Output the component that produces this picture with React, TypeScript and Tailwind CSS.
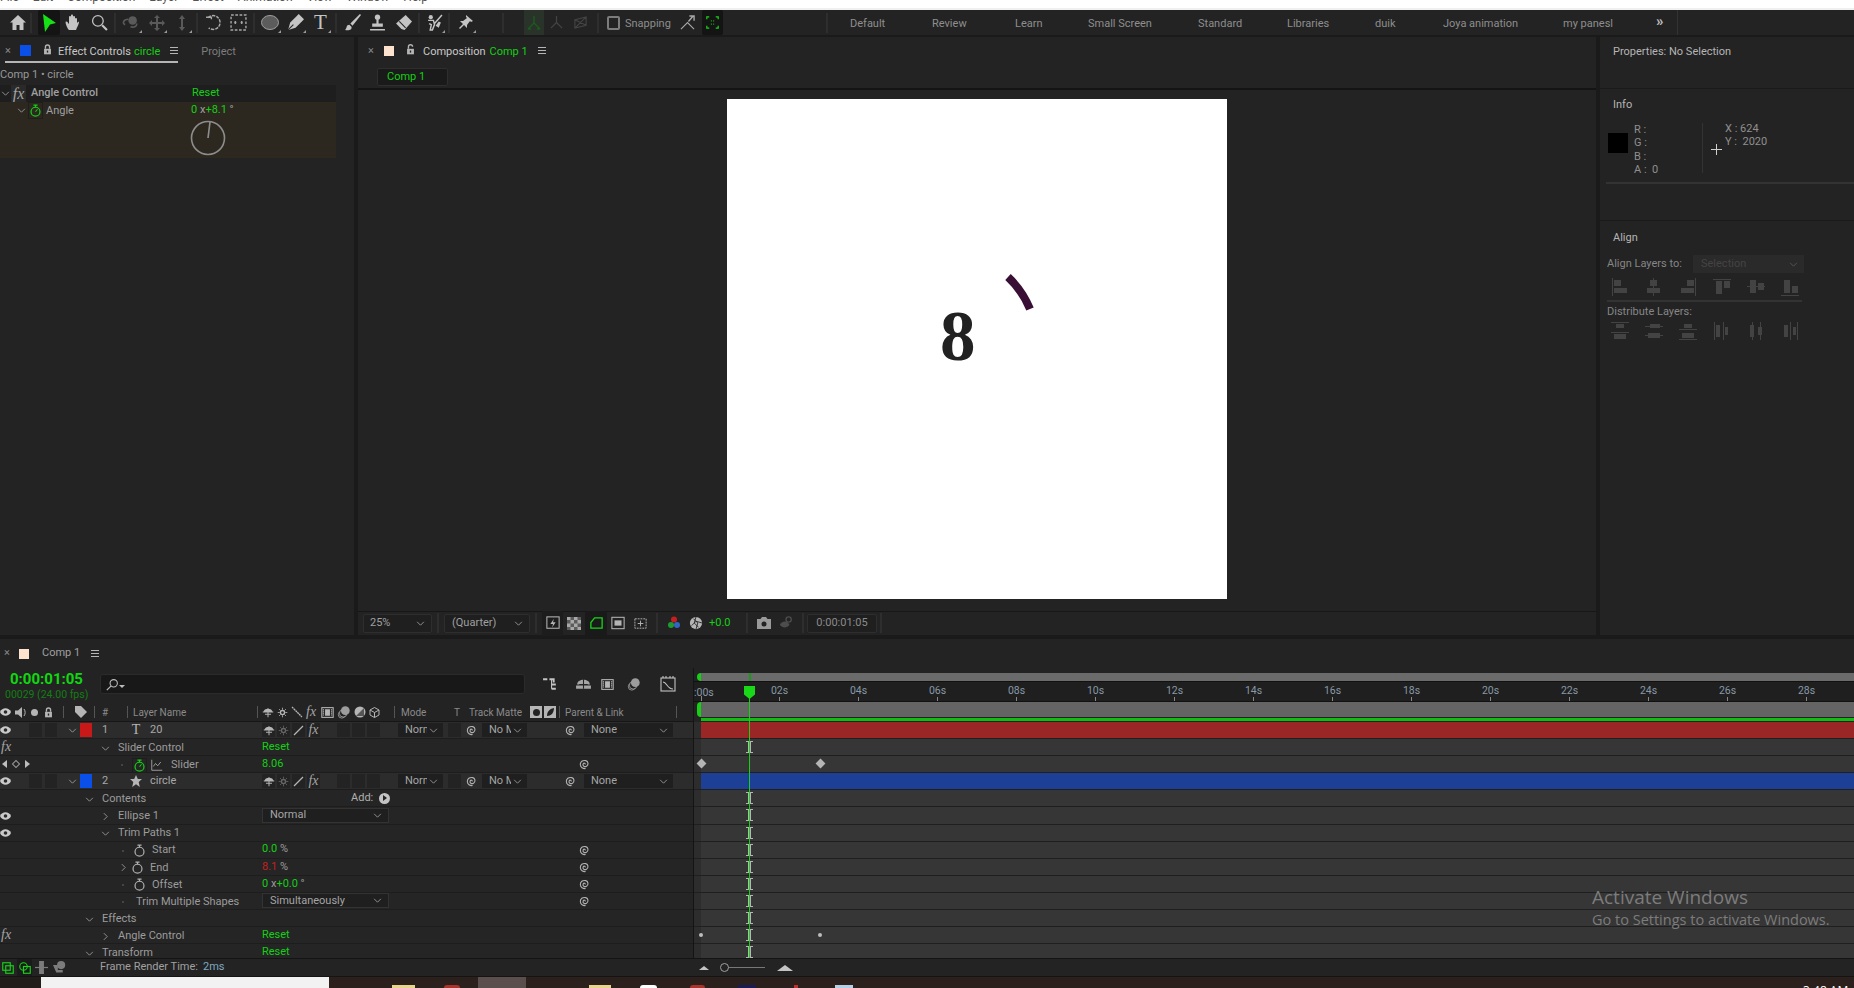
import type { ReactNode } from "react";

const menus = ["File", "Edit", "Composition", "Layer", "Effect", "Animation", "View", "Window", "Help"];

const workspaces = [
  { label: "Default", w: "w-[82px]" },
  { label: "Review", w: "w-[83px]" },
  { label: "Learn", w: "w-[73px]" },
  { label: "Small Screen", w: "w-[110px]" },
  { label: "Standard", w: "w-[89px]" },
  { label: "Libraries", w: "w-[88px]" },
  { label: "duik", w: "w-[68px]" },
  { label: "Joya animation", w: "w-[120px]" },
  { label: "my panesl", w: "w-[93px]" },
];

const rulerMarks = ["02s", "04s", "06s", "08s", "10s", "12s", "14s", "16s", "18s", "20s", "22s", "24s", "26s", "28s"];

function Svg({ size = 16, children, className = "" }: { size?: number; children: ReactNode; className?: string }) {
  return (
    <svg width={size} height={size} viewBox="0 0 16 16" fill="none" stroke="currentColor" className={className}>
      {children}
    </svg>
  );
}

function Sep({ className = "" }: { className?: string }) {
  return <div className={`w-[2px] h-[20px] bg-[#2e2e2e] shrink-0 ${className}`} />;
}

function Tool({ className = "w-[25px]", corner, children }: { className?: string; corner?: boolean; children: ReactNode }) {
  return (
    <div className={`relative h-[25px] flex items-center justify-center shrink-0 ${className}`}>
      {children}
      {corner && <div className="absolute right-[2px] bottom-[2px] w-0 h-0 border-l-[3px] border-l-transparent border-b-[3px] border-b-[#9a9a9a]" />}
    </div>
  );
}

function Hamburger() {
  return (
    <div className="w-[8px] flex flex-col gap-[2px] shrink-0">
      <div className="h-px bg-[#b5b5b5]" />
      <div className="h-px bg-[#b5b5b5]" />
      <div className="h-px bg-[#b5b5b5]" />
    </div>
  );
}

function Lock({ open = false }: { open?: boolean }) {
  return (
    <Svg size={11} className="text-[#b5b5b5]">
      <path d={open ? "M5 7V4a3 3 0 0 1 6 0" : "M5 7V4.5a3 3 0 0 1 6 0V7"} strokeWidth="2" />
      <rect x="3" y="7" width="10" height="8" fill="currentColor" stroke="none" />
      <rect x="7" y="9.5" width="2" height="3" fill="#232323" stroke="none" />
    </Svg>
  );
}

function Chevron({ open = true, className = "" }: { open?: boolean; className?: string }) {
  return (
    <Svg size={9} className={`text-[#9a9a9a] ${className}`}>
      <path d={open ? "M2 5l6 6 6-6" : "M5 2l6 6-6 6"} strokeWidth="1.6" />
    </Svg>
  );
}

function Stopwatch({ green = false }: { green?: boolean }) {
  return (
    <Svg size={13} className={green ? "text-[#16d016]" : "text-[#b0b0b0]"}>
      <circle cx="8" cy="9.5" r="5.5" strokeWidth="1.5" />
      <path d="M5.5 1.5h5M8 1.5v2.5" strokeWidth="1.5" />
      {green && <path d="M8 9.5l2.5-3" strokeWidth="1.3" />}
    </Svg>
  );
}

function Spiral({ className = "" }: { className?: string }) {
  return (
    <Svg size={12} className={`text-[#b0b0b0] shrink-0 ${className}`}>
      <path d="M8 8.5c1-1.5-1.5-2.5-2.5-.5-1 2.5 2 4.5 4.500 3 3-2 2.500-6.500-1-7.500C5 2.500 1.500 5 1.800 9c.3 3.500 3.500 5.500 7 5" strokeWidth="1.500" />
    </Svg>
  );
}

function Eye() {
  return (
    <svg width="11" height="8" viewBox="0 0 11 8" className="shrink-0">
      <path d="M0 4c2-5 9-5 11 0-2 5-9 5-11 0z" fill="#c9c9c9" />
      <circle cx="5.500" cy="4" r="1.800" fill="#2a2a2a" />
    </svg>
  );
}

function Fx({ className = "" }: { className?: string }) {
  return <span className={`font-['Liberation_Serif',serif] italic text-[14px] leading-none text-[#a5a5a5] ${className}`}>fx</span>;
}

function Shy({ dim = false }: { dim?: boolean }) {
  return (
    <Svg size={12} className={dim ? "text-[#777]" : "text-[#b5b5b5]"}>
      <path d="M2 8c0-6 12-6 12 0z" fill="currentColor" stroke="none" />
      <path d="M8 3v12M4 11h8M1 8h14" strokeWidth="1.300" />
    </Svg>
  );
}

function SunBurst({ dim = false }: { dim?: boolean }) {
  return (
    <Svg size={11} className={dim ? "text-[#666]" : "text-[#b5b5b5]"}>
      <circle cx="8" cy="8" r="3" strokeWidth="2" />
      <path d="M8 1v3M8 12v3M1 8h3M12 8h3M3 3l2 2M11 11l2 2M13 3l-2 2M5 11l-2 2" strokeWidth="1.200" />
    </Svg>
  );
}

function Filmstrip() {
  return (
    <Svg size={13} className="text-[#b5b5b5]">
      <rect x="1" y="2" width="14" height="12" strokeWidth="1.300" />
      <rect x="5" y="4" width="6" height="8" fill="currentColor" stroke="none" />
      <path d="M3 4v8M13 4v8" strokeWidth="1.500" strokeDasharray="1.500 1" />
    </Svg>
  );
}

function Blobs() {
  return (
    <Svg size={14} className="text-[#9d9d9d]">
      <circle cx="5.500" cy="11" r="4" strokeWidth="1" />
      <circle cx="7" cy="9.500" r="4.300" strokeWidth="1" fill="#232323" />
      <circle cx="9.500" cy="6.500" r="5" fill="currentColor" stroke="none" />
    </Svg>
  );
}

function DarkBox({ className = "w-[13px]", children }: { className?: string; children?: ReactNode }) {
  return <div className={`h-[14px] bg-[#232323] flex items-center justify-center shrink-0 ${className}`}>{children}</div>;
}

function Dropdown({ label, className = "" }: { label: string; className?: string }) {
  return (
    <div className={`h-[14px] bg-[#1f1f1f] flex items-center justify-between pl-[7px] pr-[5px] overflow-hidden shrink-0 text-[#a5a5a5] ${className}`}>
      <span className="whitespace-nowrap overflow-hidden">{label}</span>
      <Chevron className="shrink-0" />
    </div>
  );
}

function LayerSwitches() {
  return (
    <div className="w-[136px] flex items-center gap-[2px] shrink-0">
      <DarkBox><Shy /></DarkBox>
      <DarkBox><SunBurst dim /></DarkBox>
      <DarkBox>
        <svg width="11" height="11" viewBox="0 0 11 11"><path d="M1 10L10 1" stroke="#b5b5b5" strokeWidth="1.200" /></svg>
      </DarkBox>
      <DarkBox><Fx className="text-[12px]" /></DarkBox>
      <DarkBox className="w-[13px] ml-[15px]" />
      <DarkBox />
      <DarkBox />
    </div>
  );
}

function LayerRow({ num, swatch, icon, name }: { num: string; swatch: string; icon: ReactNode; name: string }) {
  return (
    <div className="h-[17.100px] bg-[#2c2c2c] border-b border-[#1d1d1d] flex items-center text-[11px] text-[#a8a8a8]">
      <div className="w-[262px] flex items-center shrink-0">
        <div className="w-[11px] flex justify-center shrink-0"><Eye /></div>
        <DarkBox className="w-[13px] ml-[18px]" />
        <DarkBox className="w-[12px] ml-[3px]" />
        <div className="w-[10px] ml-[10px] flex justify-center shrink-0"><Chevron /></div>
        <div className={`w-[12px] h-[14px] ml-[3px] shrink-0 ${swatch}`} />
        <div className="w-[38px] pl-[10px] shrink-0">{num}</div>
        <div className="w-[12px] flex justify-center shrink-0">{icon}</div>
        <div className="ml-[8px]">{name}</div>
      </div>
      <LayerSwitches />
      <Dropdown label="Normal" className="w-[45px] [&>span]:w-[22px]" />
      <DarkBox className="w-[13px] ml-[5px]" />
      <Spiral className="ml-[5px]" />
      <Dropdown label="No Matte" className="w-[45px] ml-[4px] [&>span]:w-[22px]" />
      <Spiral className="ml-[38px]" />
      <Dropdown label="None" className="w-[89px] ml-[7px]" />
    </div>
  );
}

function PropRow({
  gutter,
  indent,
  chevron,
  children,
  value,
  parent,
}: {
  gutter?: ReactNode;
  indent: string;
  chevron?: "open" | "closed" | "none";
  children: ReactNode;
  value?: ReactNode;
  parent?: boolean;
}) {
  return (
    <div className="h-[17.100px] bg-[#252525] border-b border-[#1d1d1d] flex items-center text-[11px] text-[#9c9c9c]">
      <div className="w-[262px] flex items-center shrink-0">
        <div className="w-[40px] flex items-center shrink-0">{gutter}</div>
        <div className={`flex items-center pt-[2px] ${indent}`}>
          {chevron && chevron !== "none" && (
            <div className="w-[10px] mr-[8px] flex justify-center shrink-0"><Chevron open={chevron === "open"} /></div>
          )}
          {children}
        </div>
      </div>
      <div className="w-[136px] shrink-0 flex items-center">{value}</div>
      {parent && <Spiral className="ml-[181px]" />}
    </div>
  );
}

function Green({ children }: { children: ReactNode }) {
  return <span className="text-[#14cf14]">{children}</span>;
}

function Angle({ value }: { value: string }) {
  return (
    <span>
      <Green>0</Green> x<Green>+{value}</Green> °
    </span>
  );
}

function Toolbar() {
  const off = "text-[#5a5a5a]";
  const on = "text-[#c4c4c4]";
  return (
    <div className="h-[25px] bg-[#232323] flex items-center pl-[5px] font-['Roboto',sans-serif] text-[11px] text-[#8e8e8e]">
      <Tool>
        <svg width="16" height="15" viewBox="0 0 16 15" className={on}><path d="M8 0L0 7.500h2.500V15h4v-5h3v5h4V7.500H16z" fill="currentColor" /></svg>
      </Tool>
      <Sep />
      <Tool className="w-[22px] ml-[6px] bg-[#141414] rounded-[2px]">
        <svg width="14" height="18" viewBox="0 0 14 18"><path d="M1 0l13 9-6 1.500L3 18z" fill="#17e017" /></svg>
      </Tool>
      <Tool className="w-[26px]">
        <svg width="16" height="17" viewBox="0 0 16 17" className={on}><path d="M3 15C1 11 0 8 1 7.500s2 1 3 2.500V3c0-1.500 2-1.500 2 0V1.500c0-1.500 2-1.500 2 0V3c0-1.500 2-1.500 2 0v2c0-1.500 2-1.500 2 0v4c1-1.500 2-1.500 2-1 0 2-2 5-3 8H4z" fill="currentColor" /></svg>
      </Tool>
      <Tool className="w-[26px]">
        <Svg size={17} className={on}><circle cx="6.500" cy="6.500" r="5" strokeWidth="1.200" /><path d="M10.500 10.500L15 15" strokeWidth="2" /></Svg>
      </Tool>
      <Sep className="ml-[2px]" />
      <Tool className="w-[27px] ml-[1px]" corner>
        <Svg size={17} className={off}><circle cx="10" cy="6" r="4" fill="currentColor" stroke="none" /><path d="M6 5C1 5 0 9 3 10M8 12c3 1 6 0 6-3" strokeWidth="1.500" /></Svg>
      </Tool>
      <Tool corner>
        <Svg size={16} className={off}><path d="M8 0l3 3H9v4h4V5l3 3-3 3V9H9v4h2l-3 3-3-3h2V9H3v2L0 8l3-3v2h4V3H5z" fill="currentColor" stroke="none" /></Svg>
      </Tool>
      <Tool corner>
        <Svg size={16} className={off}><path d="M8 0l3 4H9v8h2l-3 4-3-4h2V4H5z" fill="currentColor" stroke="none" /></Svg>
      </Tool>
      <Sep className="ml-[2px]" />
      <Tool className="w-[26px] ml-[2px]">
        <Svg size={17} className="text-[#a8a8a8]"><path d="M3 3.500A6.500 6.500 0 1 1 3.500 13" strokeWidth="1.400" strokeDasharray="3 1" /><path d="M1 3h5v2" strokeWidth="1.300" /></Svg>
      </Tool>
      <Tool>
        <Svg size={17} className="text-[#a8a8a8]"><rect x="1" y="1" width="14" height="14" strokeWidth="1.300" strokeDasharray="2.500 1.500" /><path d="M4 8h2M10 8h2M5 6.500v3M11 6.500v3" strokeWidth="1.200" /></Svg>
      </Tool>
      <Sep className="ml-[2px]" />
      <Tool className="w-[26px] ml-[2px]" corner>
        <svg width="18" height="15" viewBox="0 0 18 15"><ellipse cx="9" cy="7.500" rx="8.500" ry="7" fill="#5c5c5c" stroke="#a0a0a0" strokeWidth="1" /></svg>
      </Tool>
      <Tool corner>
        <Svg size={17} className={on}><path d="M1 15l2-7 6-6 5 5-6 6zM9 2l2-2 5 5-2 2" fill="currentColor" stroke="none" /><path d="M1 15l5-5" stroke="#232323" strokeWidth="1" /></Svg>
      </Tool>
      <Tool corner>
        <span className="font-['Liberation_Serif',serif] text-[21px] leading-none text-[#c4c4c4]">T</span>
      </Tool>
      <Sep className="ml-[2px]" />
      <Tool className="w-[26px] ml-[2px]">
        <Svg size={17} className={on}><path d="M15 0L6 9l2 2 8-10zM5 10c-3 0-2 3-4 5 3 1 7 0 6-3z" fill="currentColor" stroke="none" /></Svg>
      </Tool>
      <Tool>
        <Svg size={17} className={on}><circle cx="8" cy="3" r="2.500" fill="currentColor" stroke="none" /><path d="M7 5h2v4h4v3H3V9h4zM1 14h14v1.500H1z" fill="currentColor" stroke="none" /></Svg>
      </Tool>
      <Tool className="w-[27px]">
        <Svg size={17} className={on}><path d="M10 1l6 6-7 8-3-1-5-5z" fill="currentColor" stroke="none" /><path d="M4 7l6 6" stroke="#232323" strokeWidth="1" /></Svg>
      </Tool>
      <Sep className="ml-[1px]" />
      <Tool className="w-[26px] ml-[1px]" corner>
        <Svg size={17} className={on}><circle cx="4.500" cy="3" r="2" fill="currentColor" stroke="none" /><path d="M2 6h5l1 4-2 5H4l1-5-2-1M8 9l7-8" strokeWidth="1.400" /><path d="M9 11l3-4 2 1-2 5z" fill="currentColor" stroke="none" /></Svg>
      </Tool>
      <Sep className="ml-[1px]" />
      <Tool className="w-[26px] ml-[2px]" corner>
        <Svg size={16} className={on}><path d="M9 0l7 6-2 1-1-1-3 4 0 3-3-3-4 4-1-1 4-4-3-3 3 0 4-3-1-1z" fill="currentColor" stroke="none" /></Svg>
      </Tool>
      <Sep className="ml-[24px]" />
      <Tool className="w-[20px] ml-[20px] bg-[#2a332a]">
        <Svg size={16} className="text-[#1d5a1d]"><path d="M8 8V1M8 8l-6 6M8 8l6 6M2 14h3M14 14h-3" strokeWidth="1.400" /></Svg>
      </Tool>
      <Tool className="w-[24px]">
        <Svg size={15} className="text-[#444]"><path d="M8 8V1M8 8l-6 6M8 8l6 6" strokeWidth="1.300" /></Svg>
      </Tool>
      <Tool className="w-[24px]">
        <Svg size={15} className="text-[#444]"><path d="M2 5l12-3v9L2 14zM2 5l12 6M14 2L2 14" strokeWidth="1.200" /></Svg>
      </Tool>
      <Sep className="ml-[5px]" />
      <div className="w-[13px] h-[14px] ml-[8px] mt-[1px] border-2 border-[#7c7c7c] rounded-[2px] shrink-0" />
      <div className="w-[45px] ml-[5px] mt-[3px] shrink-0">Snapping</div>
      <Tool className="w-[18px] ml-[8px]">
        <Svg size={15} className="text-[#a8a8a8]"><path d="M1 15l7-7 7 7" strokeWidth="1.200" /><path d="M9 7l5-6M10 1h5v5" strokeWidth="1.500" /></Svg>
      </Tool>
      <Tool className="w-[21px] ml-[6px] bg-[#141414] rounded-[2px]">
        <Svg size={13} className="text-[#17d517]"><path d="M1 4V1h3M12 1h3v3M15 12v3h-3M4 15H1v-3M6 6h1M9 6h1M6 10h1M9 10h1" strokeWidth="1.500" /></Svg>
      </Tool>
      <Sep className="ml-[103px]" />
      <div className="flex items-center ml-[22px] text-[11px]">
        {workspaces.map((item) => (
          <div key={item.label} className={`shrink-0 whitespace-nowrap mt-[3px] ${item.w}`}>{item.label}</div>
        ))}
        <div className="w-[21px] text-[15px] leading-none font-bold text-[#bdbdbd] -mt-[3px] shrink-0">»</div>
      </div>
      <div className="w-px h-[25px] bg-[#333] shrink-0" />
    </div>
  );
}

function EffectPanel() {
  return (
    <div className="w-[354px] bg-[#232323] shrink-0 text-[11px] text-[#a0a0a0]">
      <div className="h-[27px] flex items-start pt-[8px] relative">
        <span className="w-[15px] pl-[5px] text-[#888] leading-[12px] shrink-0">×</span>
        <div className="w-[11px] h-[11px] ml-[5px] bg-[#0a4fe8] shrink-0" />
        <div className="ml-[11px] shrink-0 -mt-px"><Lock /></div>
        <span className="ml-[5px] text-[#c9c9c9] whitespace-nowrap leading-[13px] shrink-0">Effect Controls</span>
        <span className="ml-[3px] text-[#14cf14] leading-[13px] shrink-0">circle</span>
        <div className="ml-[10px] mt-[2px]"><Hamburger /></div>
        <span className="ml-[23px] text-[#7d7d7d] leading-[13px]">Project</span>
        <div className="absolute left-[5px] top-[24px] w-[173px] h-[2px] bg-[#b5b5b5]" />
      </div>
      <div className="h-[21px] pt-[2px] flex items-center text-[#989898]">Comp 1 • circle</div>
      <div className="w-[336px] h-[17px] bg-[#1e1e1e] flex items-center">
        <div className="w-[11px] flex justify-center shrink-0"><Chevron /></div>
        <div className="w-[15px] h-[17px] bg-[#2a2a2a] flex items-center justify-center shrink-0"><Fx className="text-[16px]" /></div>
        <span className="ml-[5px] w-[161px] font-medium shrink-0">Angle Control</span>
        <Green>Reset</Green>
      </div>
      <div className="w-[336px] h-[56px] bg-[#2c2820] relative">
        <div className="h-[17px] flex items-center">
          <div className="w-[28px] pl-[17px] shrink-0"><Chevron /></div>
          <div className="w-[15px] h-[17px] border border-[#1e1e1e] flex items-center justify-center shrink-0"><Stopwatch green /></div>
          <span className="ml-[3px] mt-px w-[145px] shrink-0">Angle</span>
          <Angle value="8.1" />
        </div>
        <svg width="36" height="36" viewBox="0 0 36 36" className="ml-[190px] mt-[1px]">
          <circle cx="18" cy="18" r="16.500" fill="none" stroke="#8d8d8d" strokeWidth="1.600" />
          <path d="M18 18L20 2" stroke="#8d8d8d" strokeWidth="1.600" />
        </svg>
      </div>
    </div>
  );
}

function FooterBox({ className, children }: { className: string; children: ReactNode }) {
  return <div className={`h-[19px] border border-[#2e2e2e] rounded-[2px] bg-[#1f1f1f] flex items-center shrink-0 pt-px ${className}`}>{children}</div>;
}

function CompPanel() {
  return (
    <div className="flex-1 bg-[#232323] flex flex-col text-[11px] text-[#a0a0a0]">
      <div className="h-[29px] flex items-start pt-[8px] pl-[10px]">
        <span className="w-[13px] text-[#888] leading-[12px] shrink-0">×</span>
        <div className="w-[10px] h-[10px] ml-[3px] mt-px bg-[#fde3cd] shrink-0" />
        <div className="ml-[11px] -mt-px shrink-0"><Lock open /></div>
        <span className="ml-[7px] text-[#c9c9c9] leading-[13px]">Composition</span>
        <span className="ml-[4px] text-[#14cf14] leading-[13px]">Comp 1</span>
        <div className="ml-[10px] mt-[2px]"><Hamburger /></div>
      </div>
      <div className="h-[24px] border-b-2 border-[#141414] pl-[19px]">
        <div className="w-[71px] h-[18px] mt-[2px] bg-[#1a1a1a] border border-[#2e2e2e] rounded-[2px] flex items-center pl-[9px] text-[#14cf14]">Comp 1</div>
      </div>
      <div className="h-[521px] flex justify-center pt-[9px] overflow-hidden">
        <div className="relative w-[500px] h-[500px] bg-white overflow-hidden">
          <span className="absolute left-[213px] top-[197px] font-['Liberation_Serif',serif] font-bold text-[71px] leading-[80px] text-[#222]">8</span>
          <svg width="500" height="500" viewBox="0 0 500 500" className="absolute inset-0">
            <path d="M281 178Q295 191 303 210" fill="none" stroke="#3a0f35" strokeWidth="8" />
          </svg>
        </div>
      </div>
      <div className="h-[23px] border-t border-[#171717] flex items-center pl-[5px]">
        <FooterBox className="w-[69px] pl-[6px] pr-[6px] justify-between">25% <Chevron /></FooterBox>
        <Sep className="ml-[5px]" />
        <FooterBox className="w-[86px] ml-[5px] pl-[7px] pr-[6px] justify-between">(Quarter) <Chevron /></FooterBox>
        <Sep className="ml-[5px]" />
        <Tool className="w-[21px] ml-[5px] bg-[#1d1d1d]">
          <Svg size={14} className="text-[#b5b5b5]"><rect x="1" y="1" width="14" height="13" strokeWidth="1.200" /><path d="M9 3L5 9h3l-1 4 4-6H8z" fill="currentColor" stroke="none" /></Svg>
        </Tool>
        <Tool className="w-[22px]">
          <svg width="14" height="13" viewBox="0 0 14 13">
            <rect width="14" height="13" fill="#5c5c5c" />
            <path d="M0 0h3.500v3H0zM7 0h3.500v3H7zM3.500 3H7v3.500H3.500zM10.500 3H14v3.500h-3.500zM0 6.500h3.500V10H0zM7 6.500h3.500V10H7zM3.500 10H7v3H3.500zM10.500 10H14v3h-3.500z" fill="#a8a8a8" />
          </svg>
        </Tool>
        <Tool className="w-[22px] bg-[#1a1a1a] rounded-[2px]">
          <Svg size={15} className="text-[#17d517]"><path d="M2 13V7l4-5h8v11z" strokeWidth="1.400" /></Svg>
        </Tool>
        <Tool className="w-[22px]">
          <Svg size={14} className="text-[#b5b5b5]"><rect x="1" y="1.500" width="14" height="13" strokeWidth="1.200" /><rect x="4" y="5" width="8" height="6" fill="currentColor" stroke="none" /></Svg>
        </Tool>
        <Tool className="w-[22px]">
          <Svg size={15} className="text-[#b5b5b5]"><path d="M2 3h12v10H2z" strokeWidth="1" strokeDasharray="2 1" /><path d="M8 5v6M5 8h6" strokeWidth="1" /></Svg>
        </Tool>
        <Sep className="ml-[5px]" />
        <Tool className="w-[22px] ml-[5px]">
          <svg width="12" height="14" viewBox="0 0 12 14"><circle cx="6" cy="3.500" r="3" fill="#c32020" /><circle cx="3" cy="9" r="3" fill="#1f9a32" /><circle cx="9" cy="9" r="3" fill="#3068c0" /></svg>
        </Tool>
        <Tool className="w-[22px]">
          <Svg size={14} className="text-[#b5b5b5]"><circle cx="8" cy="8" r="7" fill="currentColor" stroke="none" /><path d="M8 1L6 8l5 5M15 8L8 6 3 11M8 15l2-7-5-5" stroke="#232323" strokeWidth="1" /></Svg>
        </Tool>
        <span className="ml-[2px] w-[37px] text-[#14cf14] shrink-0">+0.0</span>
        <Sep />
        <Tool className="w-[22px] ml-[5px]">
          <svg width="14" height="12" viewBox="0 0 14 12"><path d="M0 2h3.500L5 0h4l1.500 2H14v10H0z" fill="#9a9a9a" /><circle cx="7" cy="7" r="2.500" fill="#232323" /></svg>
        </Tool>
        <Tool className="w-[22px]">
          <Svg size={14} className="text-[#4d4d4d]"><path d="M1 10c3-5 8-5 11 0-3 4-8 4-11 0z" fill="currentColor" stroke="none" /><circle cx="11" cy="4" r="3" strokeWidth="1.500" /></Svg>
        </Tool>
        <Sep className="ml-[5px]" />
        <FooterBox className="w-[70px] ml-[3px] justify-center text-[#8b8b8b]">0:00:01:05</FooterBox>
        <Sep className="ml-[3px]" />
      </div>
    </div>
  );
}

function AlignIcon({ rects }: { rects: [number, number, number, number][] }) {
  return (
    <svg width="18" height="18" viewBox="0 0 18 18" className="shrink-0">
      {rects.map((r, i) => (
        <rect key={i} x={r[0]} y={r[1]} width={r[2]} height={r[3]} fill="#434343" />
      ))}
    </svg>
  );
}

const alignIcons: [number, number, number, number][][] = [
  [[1, 0, 1, 18], [3, 2, 7, 6], [3, 10, 13, 5]],
  [[8, 0, 1, 18], [5, 2, 7, 6], [2, 10, 13, 5]],
  [[16, 0, 1, 18], [8, 2, 7, 6], [2, 10, 13, 5]],
  [[0, 1, 18, 1], [3, 3, 6, 13], [11, 3, 6, 7]],
  [[0, 8, 18, 1], [3, 2, 6, 13], [11, 5, 6, 7]],
  [[0, 17, 18, 1], [3, 2, 6, 13], [11, 8, 6, 7]],
];

const distributeIcons: [number, number, number, number][][] = [
  [[0, 0, 18, 1], [5, 2, 8, 4], [0, 10, 18, 1], [3, 12, 12, 5]],
  [[0, 4, 18, 1], [5, 2, 10, 4], [0, 13, 18, 1], [3, 11, 12, 5]],
  [[0, 7, 18, 1], [5, 2, 8, 4], [0, 17, 18, 1], [3, 11, 12, 5]],
  [[1, 0, 1, 18], [3, 3, 4, 12], [10, 0, 1, 18], [12, 5, 3, 8]],
  [[5, 0, 1, 18], [3, 3, 4, 12], [13, 0, 1, 18], [11, 5, 4, 8]],
  [[9, 0, 1, 18], [3, 3, 4, 12], [16, 0, 1, 18], [12, 5, 3, 8]],
];

function RightPanel() {
  return (
    <div className="w-[254px] bg-[#232323] shrink-0 text-[11px] text-[#a0a0a0]">
      <div className="h-[52px] border-b border-[#1a1a1a] pl-[13px] pt-[8px] text-[#b5b5b5] leading-[14px]">Properties: No Selection</div>
      <div className="h-[93px] pt-[9px]">
        <div className="pl-[13px] text-[#b5b5b5] leading-[14px]">Info</div>
        <div className="flex mt-[11px] h-[50px] leading-[13.300px] text-[#8f8f8f]">
          <div className="w-[20px] h-[20px] ml-[8px] mt-[10px] bg-black shrink-0" />
          <div className="w-[68px] ml-[6px] shrink-0">
            <div>R :</div>
            <div>G :</div>
            <div>B :</div>
            <div>A : &nbsp;0</div>
          </div>
          <div className="w-px h-[50px] bg-[#333] shrink-0" />
          <svg width="11" height="11" viewBox="0 0 11 11" className="ml-[8px] mt-[21px] shrink-0"><path d="M5.500 0v11M0 5.500h11" stroke="#cfcfcf" /></svg>
          <div className="ml-[3px] -mt-[1px]">
            <div>X : 624</div>
            <div>Y : &nbsp;2020</div>
          </div>
        </div>
      </div>
      <div className="h-[2px] ml-[6px] bg-[#333]" />
      <div className="h-[37px] border-b border-[#1a1a1a]" />
      <div className="pt-[10px] pl-[7px]">
        <div className="pl-[6px] text-[#b5b5b5] leading-[14px]">Align</div>
        <div className="flex items-center mt-[10px] h-[18px] text-[#868686]">
          <span className="w-[86px] shrink-0">Align Layers to:</span>
          <div className="w-[111px] h-[18px] bg-[#2a2a2a] flex items-center justify-between pl-[8px] pr-[6px] text-[#444] shrink-0">
            Selection <Chevron className="opacity-40" />
          </div>
        </div>
        <div className="flex gap-[16px] mt-[5px] pl-[4px]">
          {alignIcons.map((rects, i) => <AlignIcon key={i} rects={rects} />)}
        </div>
        <div className="w-[195px] h-[2px] mt-[4px] bg-[#333]" />
        <div className="mt-[3px] text-[#868686] leading-[14px]">Distribute Layers:</div>
        <div className="flex gap-[16px] mt-[3px] pl-[4px]">
          {distributeIcons.map((rects, i) => <AlignIcon key={i} rects={rects} />)}
        </div>
      </div>
    </div>
  );
}

function LayerHeader() {
  const divider = "w-px h-[12px] bg-[#555] shrink-0";
  return (
    <div className="h-[19px] bg-[#232323] border-b border-[#161616] flex items-center text-[10px] text-[#8a8a8a]">
      <div className="w-[11px] flex justify-center shrink-0"><Eye /></div>
      <svg width="11" height="11" viewBox="0 0 11 11" className="ml-[4px] shrink-0"><path d="M0 3.500h3L7 0v11L3 7.500H0z" fill="#b5b5b5" /><path d="M9 2c1.500 2 1.500 5 0 7" stroke="#b5b5b5" fill="none" /></svg>
      <div className="w-[7px] h-[7px] ml-[5px] rounded-full bg-[#b5b5b5] shrink-0" />
      <div className="ml-[5px] shrink-0"><Lock /></div>
      <div className={`${divider} ml-[9px]`} />
      <svg width="12" height="12" viewBox="0 0 12 12" className="ml-[11px] shrink-0"><path d="M0 0h6l6 6-6 6-6-6z" fill="#b5b5b5" /></svg>
      <div className={`${divider} ml-[7px]`} />
      <span className="w-[32px] pl-[7px] shrink-0">#</span>
      <div className={divider} />
      <span className="w-[129px] pl-[5px] shrink-0">Layer Name</span>
      <div className={divider} />
      <div className="w-[136px] pl-[4px] flex items-center gap-[3px] shrink-0">
        <Shy />
        <SunBurst />
        <svg width="12" height="12" viewBox="0 0 12 12" className="shrink-0"><path d="M1 1l10 10" stroke="#b5b5b5" strokeWidth="1.300" strokeDasharray="2 .5" /></svg>
        <Fx className="w-[12px]" />
        <Filmstrip />
        <Blobs />
        <svg width="12" height="12" viewBox="0 0 12 12" className="shrink-0"><circle cx="6" cy="6" r="5.500" fill="#b5b5b5" /><path d="M10 2L2 10h8z" fill="#555" /></svg>
        <svg width="11" height="11" viewBox="0 0 11 11" className="shrink-0"><path d="M5.500.5l4.500 2.500v5L5.500 10.500 1 8V3zM1 3l4.500 2.500L10 3M5.500 5.500v5" fill="none" stroke="#b5b5b5" /></svg>
      </div>
      <div className={divider} />
      <span className="w-[59px] pl-[6px] shrink-0">Mode</span>
      <span className="w-[15px] shrink-0">T</span>
      <span className="w-[61px] shrink-0">Track Matte</span>
      <div className="w-[12px] h-[12px] bg-[#b5b5b5] flex items-center justify-center shrink-0"><div className="w-[7px] h-[7px] rounded-full bg-[#232323]" /></div>
      <svg width="12" height="12" viewBox="0 0 12 12" className="ml-[2px] shrink-0"><rect width="12" height="12" fill="#b5b5b5" /><path d="M3 10c0-4 2-7 7-8 0 5-3 8-7 8z" fill="#232323" /></svg>
      <div className={`${divider} ml-[3px]`} />
      <span className="w-[116px] pl-[5px] shrink-0">Parent &amp; Link</span>
      <div className={divider} />
    </div>
  );
}

function Stopdot() {
  return <div className="w-[2px] h-[2px] bg-[#444] mr-[9px] shrink-0" />;
}

function LayerColumn() {
  return (
    <div className="w-[694px] shrink-0 border-r border-[#141414] font-['Roboto',sans-serif]">
      <div className="h-[35px] bg-[#232323] flex items-start">
        <div className="w-[100px] pl-[5px] pt-[3px] shrink-0">
          <div className="pl-[5px] text-[15px] leading-[17px] font-bold text-[#0fd80f]">0:00:01:05</div>
          <div className="text-[10.500px] leading-[13px] text-[#157d15] whitespace-nowrap">00029 (24.00 fps)</div>
        </div>
        <div className="w-[425px] h-[20px] mt-[6px] bg-[#181818] border border-[#2b2b2b] rounded-[3px] flex items-center pl-[5px] shrink-0">
          <Svg size={13} className="text-[#bdbdbd] -scale-x-100"><circle cx="6.500" cy="6.500" r="4.500" strokeWidth="1.300" /><path d="M10 10l5 5" strokeWidth="1.500" /></Svg>
          <div className="w-0 h-0 border-x-[3px] border-x-transparent border-t-[3px] border-t-[#bdbdbd] mt-[4px]" />
        </div>
        <div className="flex items-center h-[32px] ml-[17px]">
          <Svg size={17} className="text-[#c4c4c4]"><path d="M1 3h4M7 3h4v3M9 8h4M9 12h4" strokeWidth="1.800" /><path d="M9 3v9" strokeWidth="1" /></Svg>
          <div className="ml-[16px]"><Svg size={17} className="text-[#a5a5a5]"><path d="M1 12V9h14v3zM2 8c0-6 12-6 12 0z" fill="currentColor" stroke="none" /><path d="M8 3v9M4 8h8" stroke="#232323" strokeWidth="1" /></Svg></div>
          <div className="ml-[9px]"><Filmstrip /></div>
          <div className="ml-[13px]"><Blobs /></div>
          <div className="ml-[19px]"><Svg size={16} className="text-[#c4c4c4]"><rect x="1" y="2" width="14" height="13" strokeWidth="1.100" /><path d="M3 6c4 0 4 7 10 7M3 0v2M6 0v2M10 0v2M13 0v2" strokeWidth="1.100" /></Svg></div>
        </div>
      </div>
      <LayerHeader />
      <div className="h-[236px] overflow-hidden">
        <LayerRow num="1" swatch="bg-[#c81818]" icon={<span className="font-['Liberation_Serif',serif] text-[14px] leading-none text-[#b5b5b5]">T</span>} name="20" />
        <PropRow gutter={<Fx className="pl-px" />} indent="pl-[60px]" chevron="open" value={<Green>Reset</Green>}>Slider Control</PropRow>
        <PropRow
          gutter={
            <div className="flex items-center gap-[6px] pl-[2px]">
              <div className="w-0 h-0 border-y-[4px] border-y-transparent border-r-[5px] border-r-[#bdbdbd]" />
              <div className="w-[6px] h-[6px] rotate-45 border border-[#9a9a9a]" />
              <div className="w-0 h-0 border-y-[4px] border-y-transparent border-l-[5px] border-l-[#bdbdbd]" />
            </div>
          }
          indent="pl-[81px]"
          value={<Green>8.06</Green>}
          parent
        >
          <Stopdot />
          <div className="w-[15px] h-[15px] border border-[#1d1d1d] flex items-center justify-center shrink-0"><Stopwatch green /></div>
          <Svg size={12} className="text-[#b0b0b0] ml-[4px]"><path d="M1 1v14h14M3 10l3-4 3 3 4-5" strokeWidth="1.100" /></Svg>
          <span className="ml-[8px]">Slider</span>
        </PropRow>
        <LayerRow
          num="2"
          swatch="bg-[#0a4fe8]"
          icon={<svg width="12" height="12" viewBox="0 0 12 12"><path d="M6 0l1.800 4H12L8.700 7l1.100 5L6 9.300 2.200 12l1.100-5L0 4h4.200z" fill="#b5b5b5" /></svg>}
          name="circle"
        />
        <PropRow
          indent="pl-[44px]"
          chevron="open"
          value={
            <span className="flex items-center gap-[6px] ml-[89px]">
              <span className="text-[#b0b0b0]">Add:</span>
              <span className="w-[11px] h-[11px] rounded-full bg-[#c4c4c4] flex items-center justify-center shrink-0">
                <span className="w-0 h-0 ml-px border-y-[3px] border-y-transparent border-l-[4px] border-l-[#232323]" />
              </span>
            </span>
          }
        >
          Contents
        </PropRow>
        <PropRow gutter={<Eye />} indent="pl-[60px]" chevron="closed" value={<Dropdown label="Normal" className="w-[127px] h-[15px] bg-[#1f1f1f] border border-[#333] pr-[6px]" />}>Ellipse 1</PropRow>
        <PropRow gutter={<Eye />} indent="pl-[60px]" chevron="open">Trim Paths 1</PropRow>
        <PropRow indent="pl-[82px]" value={<span><Green>0.0</Green> %</span>} parent>
          <Stopdot />
          <Stopwatch />
          <span className="ml-[6px]">Start</span>
        </PropRow>
        <PropRow indent="pl-[79px]" value={<span><span className="text-[#c42020]">8.1</span> %</span>} parent>
          <div className="w-[9px] mr-[3px] flex justify-center shrink-0"><Chevron open={false} /></div>
          <Stopwatch />
          <span className="ml-[6px]">End</span>
        </PropRow>
        <PropRow indent="pl-[82px]" value={<Angle value="0.0" />} parent>
          <Stopdot />
          <Stopwatch />
          <span className="ml-[6px]">Offset</span>
        </PropRow>
        <PropRow indent="pl-[82px]" value={<Dropdown label="Simultaneously" className="w-[127px] h-[15px] border border-[#333] pr-[6px]" />} parent>
          <Stopdot />
          <span className="ml-[3px] whitespace-nowrap">Trim Multiple Shapes</span>
        </PropRow>
        <PropRow indent="pl-[44px]" chevron="open">Effects</PropRow>
        <PropRow gutter={<Fx className="pl-px" />} indent="pl-[60px]" chevron="closed" value={<Green>Reset</Green>}>Angle Control</PropRow>
        <PropRow indent="pl-[44px]" chevron="open" value={<Green>Reset</Green>}>Transform</PropRow>
      </div>
    </div>
  );
}

function IBeam() {
  return (
    <svg width="7" height="12" viewBox="0 0 7 12" className="absolute left-[51.500px] top-[2px]">
      <path d="M0 .5h7M0 11.500h7" stroke="#b5b5b5" />
      <rect x="2" y="0" width="3" height="12" fill="#b5b5b5" />
    </svg>
  );
}

function Key({ className }: { className: string }) {
  return <div className={`absolute top-[4px] w-[7px] h-[7px] rotate-45 bg-[#b5b5b5] ${className}`} />;
}

function Dot({ className }: { className: string }) {
  return <div className={`absolute top-[6px] w-[4px] h-[4px] rounded-full bg-[#bdbdbd] ${className}`} />;
}

function TrackRow({ bar, children }: { bar?: string; children?: ReactNode }) {
  return (
    <div className="relative h-[17.100px] bg-[#2d2d2d] border-b border-[#1f1f1f] pl-[7px]">
      <div className={`h-full ${bar ?? "bg-[#363636]"}`} />
      {children}
    </div>
  );
}

function TrackColumn() {
  return (
    <div className="flex-1 min-w-0 relative overflow-hidden font-['Roboto',sans-serif]">
      <div className="h-[5px] bg-[#232323]" />
      <div className="h-[8px] bg-[#232323] flex items-stretch">
        <div className="w-[2px] ml-[1px]" />
        <div className="w-[4px] bg-[#16d016] rounded-l-full" />
        <div className="flex-1 bg-[#6b6b6b] relative">
          <div className="absolute left-[48px] top-0 w-[2px] h-full bg-[#1a9a1a]" />
        </div>
      </div>
      <div className="relative h-[21px] bg-[#1f1f1f] border-y border-[#111] flex pl-[46px] text-[10.500px] text-[#8799a6] whitespace-nowrap">
        <span className="absolute left-0 top-[3px]">:00s</span>
        <div className="absolute left-[7px] bottom-0 w-px h-[5px] bg-[#888]" />
        {rulerMarks.map((mark) => (
          <div key={mark} className="w-[79px] shrink-0 flex flex-col items-center pt-[2px]">
            <span className="leading-[13px]">{mark}</span>
            <div className="w-px h-[5px] bg-[#888]" />
          </div>
        ))}
      </div>
      <div className="h-[15px] bg-[#232323] flex">
        <div className="w-[2px] ml-[1px]" />
        <div className="w-[4px] bg-[#16d016] rounded-l-full" />
        <div className="flex-1 bg-[#646464]" />
      </div>
      <div className="h-[5px] pl-[7px] bg-[#232323] pt-px">
        <div className="h-[3px] bg-[#12bd12]" />
      </div>
      <div className="h-[236px] overflow-hidden">
        <TrackRow bar="bg-[#9a2626]" />
        <TrackRow><IBeam /></TrackRow>
        <TrackRow>
          <Key className="left-[4px]" />
          <Key className="left-[123px]" />
        </TrackRow>
        <TrackRow bar="bg-[#1e3f96]" />
        <TrackRow><IBeam /></TrackRow>
        <TrackRow><IBeam /></TrackRow>
        <TrackRow><IBeam /></TrackRow>
        <TrackRow><IBeam /></TrackRow>
        <TrackRow><IBeam /></TrackRow>
        <TrackRow><IBeam /></TrackRow>
        <TrackRow><IBeam /></TrackRow>
        <TrackRow><IBeam /></TrackRow>
        <TrackRow>
          <IBeam />
          <Dot className="left-[5px]" />
          <Dot className="left-[124px]" />
        </TrackRow>
        <TrackRow><IBeam /></TrackRow>
      </div>

      <div className="absolute left-[50px] top-[18px] w-[11px] h-[13px] bg-[#18d818] [clip-path:polygon(0_0,100%_0,100%_65%,50%_100%,0_65%)]" />
      <div className="absolute left-[55px] top-[30px] bottom-0 w-px bg-[#18d018]" />

      <div className="absolute left-[898px] top-[216px] font-['Open_Sans',sans-serif] text-[#7c7c7c]">
        <div className="text-[19px] leading-[26px]">Activate Windows</div>
        <div className="text-[14.500px] leading-[20px] whitespace-nowrap">Go to Settings to activate Windows.</div>
      </div>
    </div>
  );
}

function StatusBar() {
  return (
    <div className="h-[19px] bg-[#232323] border-t border-[#141414] border-b flex items-center pl-[2px] font-['Roboto',sans-serif] text-[11px] text-[#a0a0a0]">
      <Svg size={12} className="text-[#17d517]"><rect x="1" y="1" width="10" height="10" strokeWidth="1.500" /><rect x="5" y="5" width="10" height="10" strokeWidth="1.500" /></Svg>
      <div className="w-[15px] h-[17px] ml-[3px] bg-[#1b1b1b] flex items-center justify-center"><Svg size={12} className="text-[#17d517]"><circle cx="6" cy="6" r="5" strokeWidth="1.500" /><rect x="6" y="6" width="9" height="9" strokeWidth="1.500" /></Svg></div>
      <Svg size={13} className="text-[#7c7c7c] ml-[3px]"><rect x="5" y="0" width="6" height="16" fill="currentColor" stroke="none" /><path d="M0 8h16" strokeWidth="1.500" /></Svg>
      <Svg size={13} className="text-[#7c7c7c] ml-[5px]"><circle cx="10" cy="5" r="5" fill="currentColor" stroke="none" /><path d="M0 5h6v6h6v3H4z" fill="currentColor" stroke="none" /></Svg>
      <span className="ml-[34px]">Frame Render Time:</span>
      <span className="ml-[5px] text-[#7fa8c0]">2ms</span>
      <div className="ml-[474px] w-0 h-0 border-x-[5px] border-x-transparent border-b-[4px] border-b-[#c4c4c4]" />
      <div className="relative ml-[12px] w-[44px] h-px bg-[#777]">
        <div className="absolute -left-[1px] -top-[4px] w-[9px] h-[9px] rounded-full border border-[#a0a0a0] bg-[#232323]" />
      </div>
      <div className="ml-[12px] w-0 h-0 border-x-[8px] border-x-transparent border-b-[6px] border-b-[#c4c4c4]" />
    </div>
  );
}

function Taskbar() {
  return (
    <div className="relative h-[12px] bg-[#2c201d] flex items-end overflow-hidden">
      <div className="w-[41px] h-full bg-[#221c1a] shrink-0" />
      <div className="w-[288px] h-full bg-[#f2f2f2] shrink-0" />
      <div className="w-[23px] h-[3px] ml-[63px] bg-[#e8d48a] shrink-0" />
      <div className="w-[16px] h-[3px] ml-[29px] bg-[#a8352c] rounded-t-full shrink-0" />
      <div className="w-[48px] h-full ml-[18px] bg-[#5a4f4c] shrink-0" />
      <div className="w-[22px] h-[3px] ml-[63px] bg-[#e8d48a] shrink-0" />
      <div className="w-[17px] h-[3px] ml-[29px] bg-white rounded-t-full shrink-0" />
      <div className="w-[15px] h-[3px] ml-[33px] bg-[#a8352c] rounded-t-full shrink-0" />
      <div className="w-[18px] h-[3px] ml-[33px] bg-[#1c1c55] shrink-0" />
      <div className="w-[4px] h-[3px] ml-[38px] bg-[#c03030] shrink-0" />
      <div className="w-[18px] h-[3px] ml-[37px] bg-[#b5cfe6] shrink-0" />
      <span className="absolute left-[1803px] top-[7px] font-['Open_Sans',sans-serif] text-[12px] leading-[14px] text-white">3:48 AM</span>
    </div>
  );
}

export default function App() {
  return (
    <div className="w-[1854px] h-[988px] overflow-hidden bg-[#1a1a1a] flex flex-col font-['Roboto',sans-serif]">
      <div className="h-[8px] bg-white overflow-hidden shrink-0">
        <div className="flex gap-[14px] -mt-[11px] text-[12px] leading-[16px] text-[#555]">
          {menus.map((item) => <span key={item}>{item}</span>)}
        </div>
      </div>
      <div className="h-[2px] bg-[#f0f0f0] shrink-0" />
      <Toolbar />
      <div className="h-[2px] bg-[#1a1a1a] shrink-0" />
      <div className="h-[598px] flex gap-[4px] shrink-0">
        <EffectPanel />
        <CompPanel />
        <RightPanel />
      </div>
      <div className="h-[4px] shrink-0" />
      <div className="h-[319px] bg-[#232323] flex flex-col shrink-0">
        <div className="h-[29px] flex items-center pl-[4px] font-['Roboto',sans-serif] text-[11px] text-[#a0a0a0]">
          <span className="w-[15px] text-[#888] shrink-0">×</span>
          <div className="w-[10px] h-[10px] bg-[#fde3cd] shrink-0" />
          <span className="ml-[13px]">Comp 1</span>
          <div className="ml-[11px]"><Hamburger /></div>
        </div>
        <div className="flex h-[290px] overflow-hidden">
          <LayerColumn />
          <TrackColumn />
        </div>
      </div>
      <StatusBar />
      <Taskbar />
    </div>
  );
}
